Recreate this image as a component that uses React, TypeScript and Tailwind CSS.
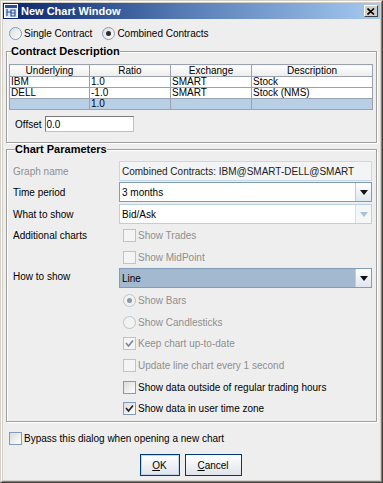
import React from 'react';

const Radio = ({ checked, disabled, label }: { checked?: boolean; disabled?: boolean; label: string }) => (
  <div className="flex items-center gap-[2px]">
    <span
      className={`flex h-[13px] w-[13px] items-center justify-center rounded-full border ${
        disabled ? 'border-[#b8c4d0] bg-[#f2f2f2]' : 'border-[#7f9db9] bg-gradient-to-br from-[#dcdcdc] to-white'
      }`}
    >
      {checked && <span className={`h-[5px] w-[5px] rounded-full ${disabled ? 'bg-[#8a98a8]' : 'bg-[#2c2c2c]'}`} />}
    </span>
    <span className={disabled ? 'text-[#8e8e8e]' : 'text-black'}>{label}</span>
  </div>
);

const Check = ({ checked, disabled, label }: { checked?: boolean; disabled?: boolean; label: string }) => (
  <div className="flex items-center gap-[2px]">
    <span
      className={`flex h-[13px] w-[13px] items-center justify-center border ${
        disabled ? 'border-[#b8c4d0] bg-[#f4f4f4]' : 'border-[#7f9db9] bg-gradient-to-br from-[#dcdcdc] to-white'
      }`}
    >
      {checked && (
        <svg width="9" height="9" viewBox="0 0 9 9">
          <path d="M1 4 L3.5 7 L8 1.5" fill="none" stroke={disabled ? '#7a8896' : '#222'} strokeWidth="1.6" />
        </svg>
      )}
    </span>
    <span className={`whitespace-nowrap ${disabled ? 'text-[#8e8e8e]' : 'text-black'}`}>{label}</span>
  </div>
);

const Combo = ({ value, variant }: { value: string; variant: 'normal' | 'disabled' | 'selected' }) => {
  const box =
    variant === 'selected'
      ? 'border-[#7f9db9] bg-[#a3b9d0]'
      : variant === 'disabled'
      ? 'border-[#b8cfe5] bg-white'
      : 'border-[#7f9db9] bg-white';
  return (
    <div className={`flex h-[20px] items-stretch border ${box}`}>
      <span className="flex flex-1 items-center pl-[2px] text-black">{value}</span>
      <span
        className={`flex w-[16px] items-center justify-center border-l ${
          variant === 'disabled' ? 'border-[#d6e0ea] bg-[#f4f6f8]' : 'border-[#b8cfe5] bg-gradient-to-b from-white to-[#dfe6ee]'
        }`}
      >
        <svg width="8" height="5" viewBox="0 0 8 5">
          <path d="M0 0 H8 L4 5 Z" fill={variant === 'disabled' ? '#a8c0d8' : '#111'} />
        </svg>
      </span>
    </div>
  );
};

const Label = ({ children, disabled }: { children: React.ReactNode; disabled?: boolean }) => (
  <span className={disabled ? 'text-[#8e8e8e]' : 'text-black'}>{children}</span>
);

export default function App() {
  const rows = [
    ['IBM', '1.0', 'SMART', 'Stock'],
    ['DELL', '-1.0', 'SMART', 'Stock (NMS)'],
  ];

  return (
    <div className="h-[483px] w-[383px] border-t border-l border-r border-b border-t-[#d4d0c8] border-l-[#d4d0c8] border-r-[#404040] border-b-[#404040] font-['Liberation_Sans',Arial,sans-serif] text-[10px] leading-[13px]">
      <div className="flex h-full flex-col border border-t-white border-l-white border-r-[#808080] border-b-[#808080] bg-[#d4d0c8] p-[1px]">
        {/* title bar */}
        <div className="flex h-[16px] items-center bg-gradient-to-r from-[#0a246a] via-[#5a7fb8] to-[#a6caf0] pl-[1px] pr-[2px]">
          <svg width="14" height="14" viewBox="0 0 14 14" className="mr-[3px]">
            <rect x="0.5" y="0.5" width="13" height="13" fill="#dfe8f4" stroke="#fff" />
            <rect x="1" y="1" width="12" height="3" fill="#2a4f9a" />
            <path d="M3 5 V12 M3 8 H7 M7 6 H11 V12 H7 Z M7 9 H11" stroke="#2a4f9a" strokeWidth="1.2" fill="none" />
          </svg>
          <span className="flex-1 text-[11px] font-bold text-white">New Chart Window</span>
          <span className="flex h-[12px] w-[14px] items-center justify-center border border-t-white border-l-white border-r-[#404040] border-b-[#404040] bg-[#d4d0c8]">
            <svg width="8" height="7" viewBox="0 0 8 7">
              <path d="M0.5 0.5 L7 6.5 M7 0.5 L0.5 6.5" stroke="#000" strokeWidth="1.6" />
            </svg>
          </span>
        </div>

        {/* body */}
        <div className="flex flex-1 flex-col bg-[#eeeeee] px-[3px] pt-[7px]">
          <div className="flex h-[14px] items-center gap-[10px] pl-[3px]">
            <Radio label="Single Contract" />
            <Radio label="Combined Contracts" checked />
          </div>

          <fieldset className="mt-[5px] border border-[#a0a0a0] px-[2px] pb-[10px] shadow-[inset_1px_1px_0_#fff,1px_1px_0_#fff]">
            <legend className="ml-[2px] px-0 text-[11px] font-bold leading-[13px]">Contract Description</legend>
            <table className="mt-[6px] w-[363px] table-fixed border-collapse border border-[#7a7a7a]">
              <colgroup>
                <col className="w-[80px]" />
                <col className="w-[81px]" />
                <col className="w-[81px]" />
                <col className="w-[121px]" />
              </colgroup>
              <thead>
                <tr className="h-[12px]">
                  {['Underlying', 'Ratio', 'Exchange', 'Description'].map((h) => (
                    <th key={h} className="border border-[#9aa3ad] bg-gradient-to-b from-white to-[#ececec] p-0 text-center font-normal leading-[11px]">
                      {h}
                    </th>
                  ))}
                </tr>
              </thead>
              <tbody>
                {rows.map((r) => (
                  <tr key={r[0]} className="h-[11px] bg-white">
                    {r.map((c, i) => (
                      <td key={i} className="border border-[#9aa3ad] p-0 pl-[1px] leading-[10px]">
                        {c}
                      </td>
                    ))}
                  </tr>
                ))}
                <tr className="h-[11px] bg-[#b8cfe5]">
                  {['', '1.0', '', ''].map((c, i) => (
                    <td key={i} className="border border-[#9aa3ad] p-0 pl-[1px] leading-[10px]">
                      {c}
                    </td>
                  ))}
                </tr>
              </tbody>
            </table>
            <div className="mt-[6px] flex items-center gap-[3px] pl-[6px]">
              <span>Offset</span>
              <div className="flex h-[16px] w-[89px] items-center border border-t-[#7a7a7a] border-l-[#7a7a7a] border-r-[#c0c0c0] border-b-[#c0c0c0] bg-white pl-[1px]">
                0.0
              </div>
            </div>
          </fieldset>

          <fieldset className="mt-[0px] border border-[#a0a0a0] pr-[4px] pl-[6px] pb-[3px] shadow-[inset_1px_1px_0_#fff,1px_1px_0_#fff]">
            <legend className="ml-[2px] px-0 text-[11px] font-bold leading-[13px]">Chart Parameters</legend>
            <div className="mt-[5px] grid grid-cols-[106px_1fr] items-center">
              <Label disabled>Graph name</Label>
              <div className="flex h-[20px] items-center whitespace-nowrap border border-[#c8d8e8] bg-[#f3f4f5] pl-[2px] text-[#222]">
                Combined Contracts: IBM@SMART-DELL@SMART
              </div>

              <div className="col-span-2 h-[1px]" />
              <Label>Time period</Label>
              <Combo value="3 months" variant="normal" />

              <div className="col-span-2 h-[2px]" />
              <Label>What to show</Label>
              <Combo value="Bid/Ask" variant="disabled" />

              <div className="flex h-[22px] items-center self-start">
                <Label>Additional charts</Label>
              </div>
              <div className="flex h-[22px] items-center pl-[4px]">
                <Check label="Show Trades" disabled />
              </div>
              <div />
              <div className="flex h-[22px] items-center pl-[4px]">
                <Check label="Show MidPoint" disabled />
              </div>

              <div className="self-start pt-[2px]">
                <Label>How to show</Label>
              </div>
              <Combo value="Line" variant="selected" />

              <div />
              <div className="flex h-[24px] items-center pl-[4px]">
                <Radio label="Show Bars" checked disabled />
              </div>
              <div />
              <div className="flex h-[20px] items-center pl-[4px]">
                <Radio label="Show Candlesticks" disabled />
              </div>
              <div />
              <div className="flex h-[22px] items-center pl-[4px]">
                <Check label="Keep chart up-to-date" checked disabled />
              </div>
              <div />
              <div className="flex h-[22px] items-center pl-[4px]">
                <Check label="Update line chart every 1 second" disabled />
              </div>
              <div />
              <div className="flex h-[22px] items-center pl-[4px]">
                <Check label="Show data outside of regular trading hours" />
              </div>
              <div />
              <div className="flex h-[20px] items-center pl-[4px]">
                <Check label="Show data in user time zone" checked />
              </div>
            </div>
          </fieldset>

          <div className="mt-[10px] flex h-[13px] items-center pl-[3px]">
            <Check label="Bypass this dialog when opening a new chart" />
          </div>

          <div className="mt-[9px] flex justify-center gap-[5px] pr-[2px]">
            <button className="h-[22px] w-[40px] border border-[#003c74] bg-gradient-to-b from-white to-[#dfe4ea] shadow-[inset_0_0_0_1px_#c0d4ea]">
              <span className="underline">O</span>K
            </button>
            <button className="h-[22px] w-[57px] border border-[#003c74] bg-gradient-to-b from-white to-[#dfe4ea]">
              <span className="underline">C</span>ancel
            </button>
          </div>
        </div>
      </div>
    </div>
  );
}
